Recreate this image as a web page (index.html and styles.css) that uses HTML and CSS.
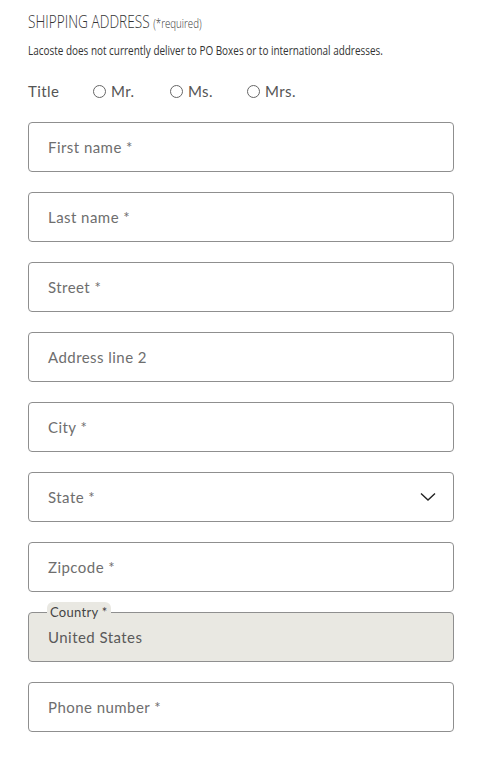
FILE: index.html
```
<!DOCTYPE html>
<html>
<head>
<meta charset="utf-8">
<link rel="stylesheet" href="styles.css">
</head>
<body>
<div class="form">
  <h2 class="heading"><span class="squeeze">SHIPPING ADDRESS <span class="req">(*required)</span></span></h2>
  <p class="note"><span class="squeeze">Lacoste does not currently deliver to PO Boxes or to international addresses.</span></p>
  <div class="title-row">
    <span class="title-label">Title</span>
    <label class="radio"><span class="dot"></span>Mr.</label>
    <label class="radio"><span class="dot"></span>Ms.</label>
    <label class="radio"><span class="dot"></span>Mrs.</label>
  </div>
  <div class="fields">
    <div class="field">First name *</div>
    <div class="field">Last name *</div>
    <div class="field">Street *</div>
    <div class="field">Address line 2</div>
    <div class="field">City *</div>
    <div class="field select">State *
      <svg class="chev" width="16" height="10" viewBox="0 0 16 10"><path d="M1 1.5 L8 8 L15 1.5" fill="none" stroke="#222" stroke-width="1.4"/></svg>
    </div>
    <div class="field">Zipcode *</div>
    <div class="field filled"><span class="float">Country *</span>United States</div>
    <div class="field">Phone number *</div>
  </div>
</div>
</body>
</html>
```
FILE: styles.css
```
* { box-sizing: border-box; }
body { margin: 0; background: #fff; font-family: Lato, "Noto Sans", sans-serif; color: #333; }
.form { padding: 8px 31px 0 28px; }
.squeeze {
  display: inline-block;
  white-space: nowrap;
  transform-origin: left center;
}
.heading {
  margin: 0;
  font-family: "Open Sans", sans-serif;
  font-weight: 300;
  font-size: 19px;
  line-height: 26px;
  color: #333;
}
.heading .squeeze { transform: scaleX(0.72); }
.req { font-size: 13.5px; }
.note {
  margin: 4px 0 0;
  font-family: "Open Sans", sans-serif;
  font-weight: 400;
  font-size: 13px;
  line-height: 20px;
  color: #333;
}
.note .squeeze { transform: scaleX(0.765); }
.title-row {
  display: flex;
  align-items: center;
  height: 24px;
  margin-top: 19px;
  font-size: 15px;
  color: #555;
  letter-spacing: 0.4px;
}
.title-label { width: 65px; }
.radio { display: flex; align-items: center; gap: 5px; width: 77px; }
.dot {
  width: 13px; height: 13px;
  border: 1px solid #666;
  border-radius: 50%;
}
.fields { display: flex; flex-direction: column; gap: 20px; margin-top: 19px; }
.field {
  position: relative;
  height: 50px;
  border: 1px solid #8f8f8f;
  border-radius: 4px;
  padding: 0 19px;
  display: flex;
  align-items: center;
  font-size: 15px;
  color: #6e6e6e;
  letter-spacing: 0.45px;
}
.select { justify-content: space-between; }
.chev { margin-right: -2px; }
.filled { background: #e9e8e2; color: #5a5a5a; }
.float {
  position: absolute;
  left: 18px;
  top: -11px;
  background: #e9e8e2;
  border-radius: 6px 6px 0 0;
  padding: 1px 3px 0;
  font-size: 13px;
  line-height: 18px;
  color: #444;
  letter-spacing: 0.3px;
}
```
